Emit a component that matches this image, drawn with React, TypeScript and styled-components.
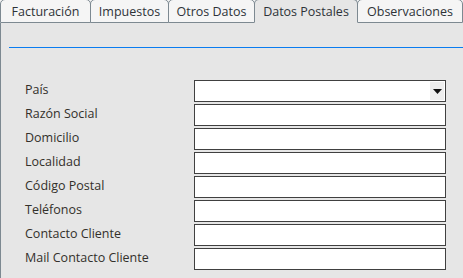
import styled, { createGlobalStyle } from "styled-components";

const GlobalStyle = createGlobalStyle`
  html, body {
    margin: 0;
    padding: 0;
    background: #f4f4f4;
    font-family: "Open Sans", "DejaVu Sans", sans-serif;
  }
  * {
    box-sizing: border-box;
  }
`;

const tabs = [
  { label: "Facturación", width: 91 },
  { label: "Impuestos", width: 79 },
  { label: "Otros Datos", width: 87 },
  { label: "Datos Postales", width: 104 },
  { label: "Observaciones", width: 106 },
];

const fields = [
  "País",
  "Razón Social",
  "Domicilio",
  "Localidad",
  "Código Postal",
  "Teléfonos",
  "Contacto Cliente",
  "Mail Contacto Cliente",
];

function App() {
  const active = "Datos Postales";

  return (
    <Page>
      <GlobalStyle />
      <TabBar>
        {tabs.map((t, i) => (
          <Tab key={t.label} $active={t.label === active} $first={i === 0} $w={t.width}>
            {t.label}
          </Tab>
        ))}
        <TabFill />
      </TabBar>
      <Panel>
        <Divider />
        <Form>
          {fields.map((f, i) => (
            <Row key={f}>
              <Label>{f}</Label>
              {i === 0 ? (
                <Select>
                  <SelectArrow>
                    <svg width="9" height="5" viewBox="0 0 9 5">
                      <path d="M0 0 H9 L4.5 5 Z" fill="#111" />
                    </svg>
                  </SelectArrow>
                </Select>
              ) : (
                <Input type="text" />
              )}
            </Row>
          ))}
        </Form>
      </Panel>
    </Page>
  );
}

const Page = styled.div`
  width: 463px;
  height: 278px;
  display: flex;
  flex-direction: column;
  overflow: hidden;
`;

const TabBar = styled.div`
  display: flex;
  height: 24px;
  margin-top: -1px;
  align-items: stretch;
`;

const Tab = styled.div<{ $active: boolean; $first: boolean; $w: number }>`
  width: ${(p) => p.$w}px;
  flex: none;
  margin-left: ${(p) => (p.$first ? "0" : "-1px")};
  border: 1px solid #7d8991;
  border-bottom: ${(p) => (p.$active ? "1px solid #e6e6e6" : "1px solid #7d8991")};
  border-radius: 5px 5px 0 0;
  background: ${(p) => (p.$active ? "#e6e6e6" : "#f5f5f5")};
  color: #2e3338;
  font-size: 12.5px;
  display: flex;
  align-items: center;
  justify-content: center;
  padding-top: 1px;
  position: relative;
  z-index: ${(p) => (p.$active ? 1 : 0)};
`;

const TabFill = styled.div`
  flex: 1;
  border-bottom: 1px solid #7d8991;
`;

const Panel = styled.div`
  flex: 1;
  background: #e6e6e6;
  border-left: 1px solid #7d8991;
  padding: 24px 0 0 8px;
`;

const Divider = styled.div`
  height: 1px;
  background: #0a7cf0;
`;

const Form = styled.div`
  display: flex;
  flex-direction: column;
  gap: 2px;
  padding: 32px 0 0 16px;
`;

const Row = styled.div`
  display: grid;
  grid-template-columns: 169px 252px;
  align-items: center;
  height: 22px;
`;

const Label = styled.span`
  font-size: 12.5px;
  color: #33302b;
  line-height: 1;
  padding-bottom: 2px;
`;

const Input = styled.input`
  width: 252px;
  height: 22px;
  margin: 0;
  border: 1px solid #404040;
  background: #ffffff;
  padding: 0 4px;
  outline: none;
  border-radius: 0;
`;

const Select = styled.div`
  width: 252px;
  height: 22px;
  border: 1px solid #404040;
  background: #ffffff;
  display: flex;
  justify-content: flex-end;
  align-items: stretch;
  padding: 0 1px;
`;

const SelectArrow = styled.div`
  width: 14px;
  margin: 1px 0;
  background: #eeeeee;
  display: flex;
  align-items: center;
  justify-content: center;
`;

export default App;
